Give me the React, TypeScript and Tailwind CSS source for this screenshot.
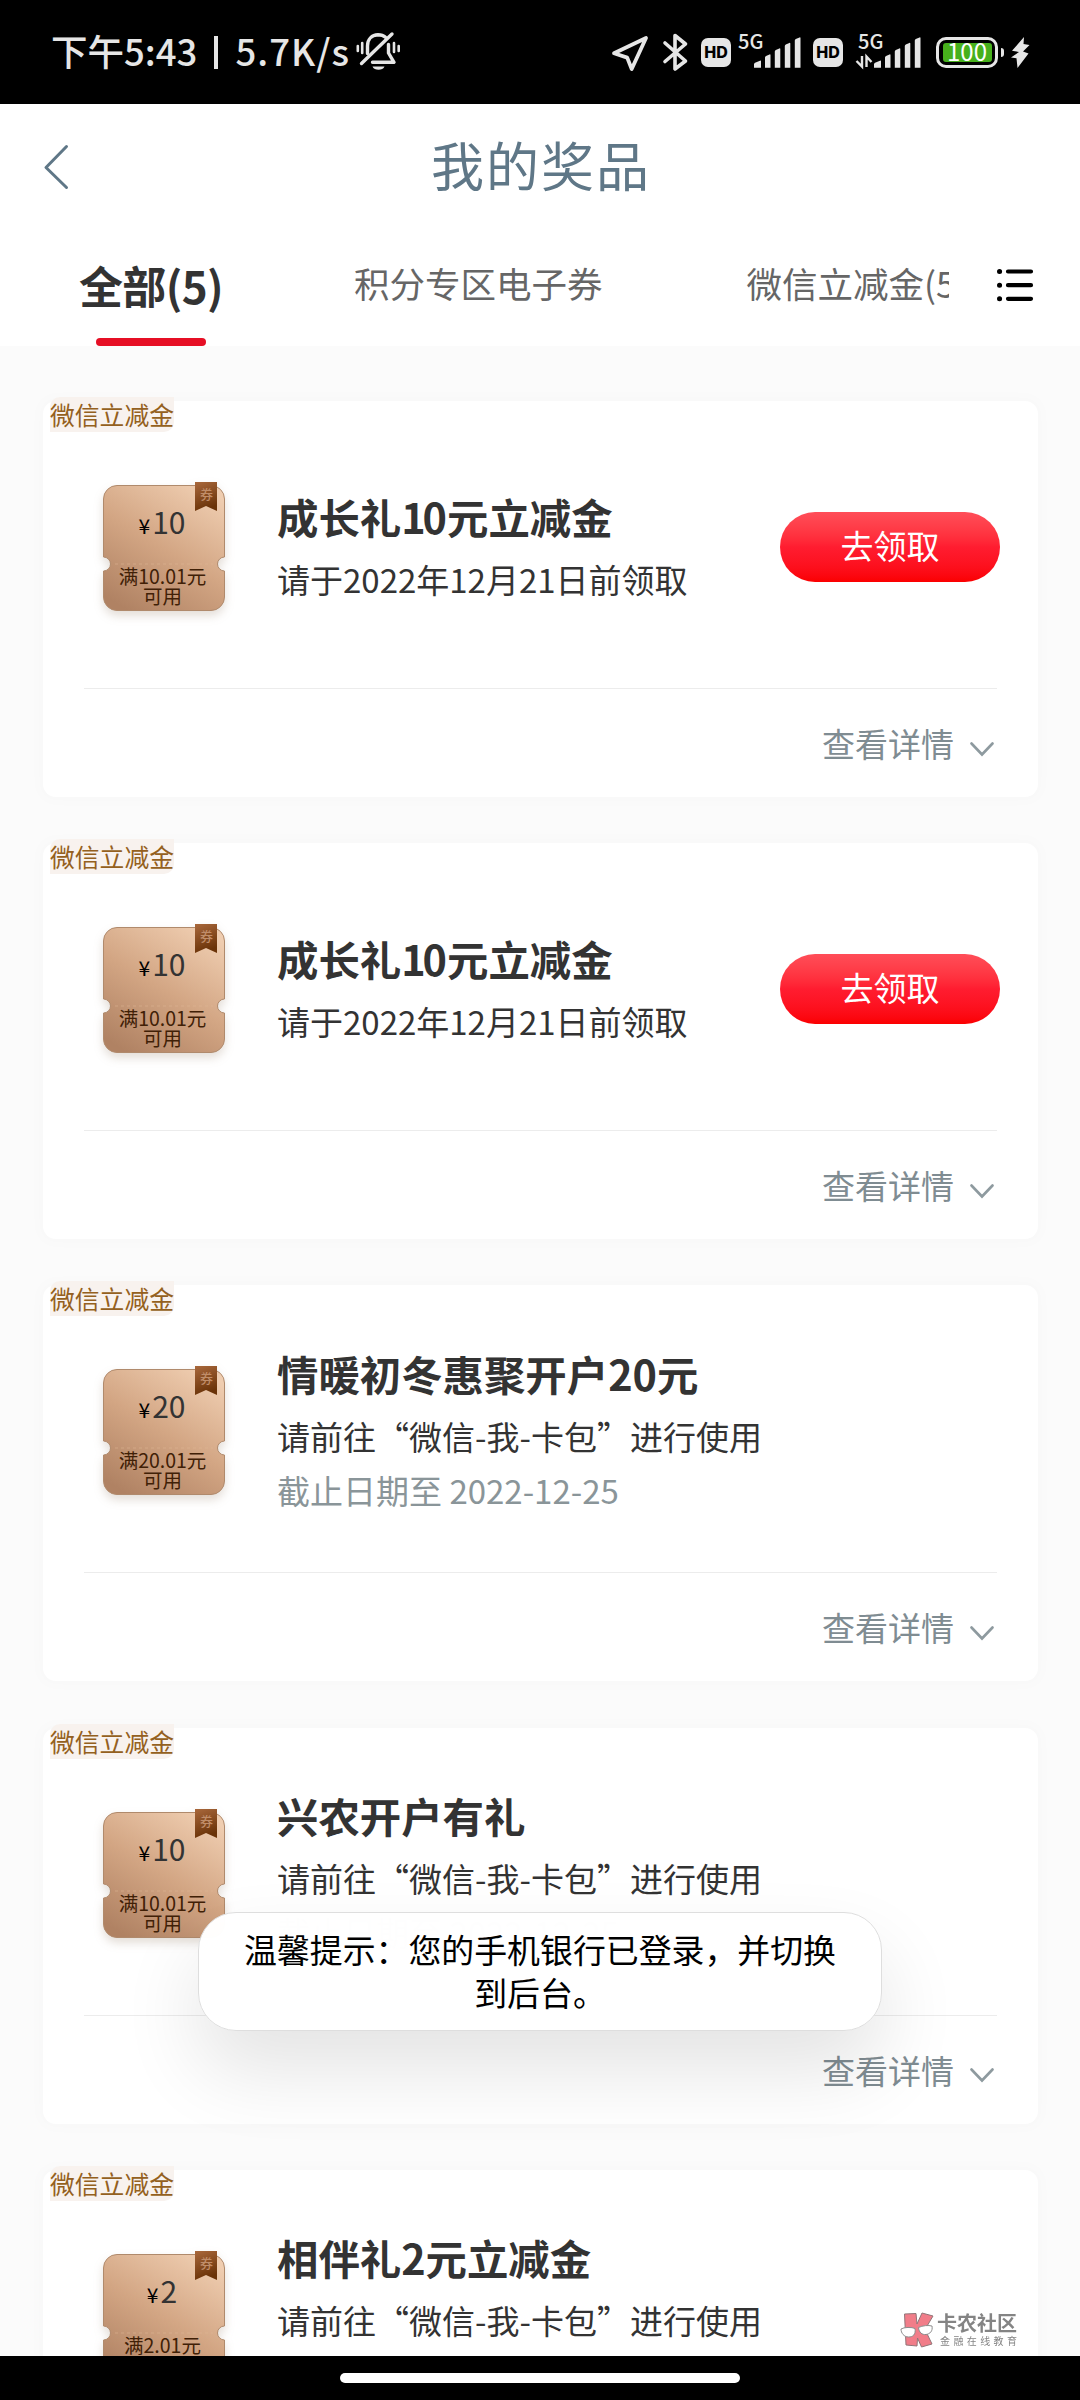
import React from "react";

type Prize = {
  id: number;
  tag: string;
  amount: string;
  limit: string;
  title: string;
  desc: string;
  deadline?: string;
  claimable?: boolean;
};

const PRIZES: Prize[] = [
  { id: 1, tag: "微信立减金", amount: "10", limit: "10.01", title: "成长礼10元立减金", desc: "请于2022年12月21日前领取", claimable: true },
  { id: 2, tag: "微信立减金", amount: "10", limit: "10.01", title: "成长礼10元立减金", desc: "请于2022年12月21日前领取", claimable: true },
  { id: 3, tag: "微信立减金", amount: "20", limit: "20.01", title: "情暖初冬惠聚开户20元", desc: "请前往“微信-我-卡包”进行使用", deadline: "截止日期至 2022-12-25" },
  { id: 4, tag: "微信立减金", amount: "10", limit: "10.01", title: "兴农开户有礼", desc: "请前往“微信-我-卡包”进行使用", deadline: "截止日期至 2022-12-25" },
  { id: 5, tag: "微信立减金", amount: "2", limit: "2.01", title: "相伴礼2元立减金", desc: "请前往“微信-我-卡包”进行使用", deadline: "截止日期至 2022-12-25" },
];

function MutedBell() {
  return (
    <svg className="ml-[6px] h-[44px] w-[46px]" viewBox="0 0 46 44" fill="none" stroke="#e6e6e6" strokeWidth="3.400" strokeLinecap="round" strokeLinejoin="round">
      <path d="M11.5 23.5V16C11.5 9 16 5 22 4.8c3 0 5.600.8 7.500 2.500" />
      <path d="M32.500 14.500v8.500l5.500 9.300H16.500" />
      <path d="M5.500 33.500L36 4" />
      <path d="M16.500 36.500h12c-1.500 4.300-10.500 4.300-12 0z" fill="#e6e6e6" stroke="none" />
      <path d="M1.800 16v5M6.200 13v10M38 13v9M42.700 16v5" strokeWidth="2.600" />
    </svg>
  );
}

function HdBadge() {
  return (
    <div className="flex h-[29px] w-[30px] items-center justify-center rounded-[7px] bg-[#e6e6e6] font-['Inter'] text-[16px] font-extrabold leading-none text-black">
      HD
    </div>
  );
}

function Signal({ data }: { data?: boolean }) {
  return (
    <div className="relative h-[44px] w-[64px]">
      <span className="absolute left-0 top-[2px] font-['Noto_Sans_CJK_SC',sans-serif] text-[20px] font-medium leading-[18px] text-[#e6e6e6]">
        5G
      </span>
      <svg className="h-[44px] w-[64px] overflow-visible" viewBox="0 0 64 44" fill="#e6e6e6">
        <path d="M16 37.700v-3.500q0-1 1-1.500l5-2q1-.4 1 .6v6.400zM27 37.700V27.500q0-1 1-1.500l3.500-1.600q1-.4 1 .6v12.700zM36.800 37.700V21.500q0-1 1-1.500l3.500-1.600q1-.4 1 .6v18.700zM46.800 37.700V16q0-1 1-1.500l3.500-1.600q1-.4 1 .6v24.200zM56.800 37.700V10.500q0-1 1-1.500l3.700-1.600q1-.4 1 .6v29.700z" />
        {data && (
          <path d="M4 26v10.500L-1.500 31M8.500 37V26.500l5 5.500" fill="none" stroke="#e6e6e6" strokeWidth="2.400" />
        )}
      </svg>
    </div>
  );
}

function StatusBar() {
  return (
    <div className="flex h-[104px] shrink-0 items-start bg-black pl-[51px] pt-[30px] text-[#e6e6e6]">
      <div className="flex h-[44px] w-[299px] items-center justify-between whitespace-nowrap text-[36.500px] font-medium leading-[44px]">
        <span className="mt-[-3px]">下午5:43</span>
        <span className="h-[33px] w-[4px] bg-[#e6e6e6]" />
        <span className="mt-[-3px] tracking-[1px]">5.7K/s</span>
      </div>
      <MutedBell />
      <div className="ml-[209px] flex h-[44px] items-center">
        <svg className="h-[44px] w-[40px]" viewBox="0 0 40 44" fill="none" stroke="#e6e6e6" strokeWidth="3.800" strokeLinejoin="round">
          <path d="M3 23.300L35 8 20.700 39 16.200 27.600z" />
        </svg>
        <svg className="ml-[10px] h-[44px] w-[28px]" viewBox="0 0 28 44" fill="none" stroke="#e6e6e6" strokeWidth="3.600" strokeLinecap="round" strokeLinejoin="round">
          <path d="M4 13L24.500 31 14 39V5.500L24.500 14 4 31.500" />
        </svg>
        <div className="ml-[12px]"><HdBadge /></div>
        <div className="ml-[7px]"><Signal /></div>
        <div className="ml-[11px]"><HdBadge /></div>
        <div className="ml-[15px]"><Signal data /></div>
        <div className="ml-[14px] flex h-[31px] w-[62px] items-center justify-center rounded-[10px] border-[3px] border-[#e6e6e6]">
          <div className="flex h-[19px] w-[49px] items-center justify-center rounded-[3px] bg-[#47b01c] text-[24px] leading-none text-white">
            <span className="mt-[-2px]">100</span>
          </div>
        </div>
        <div className="ml-[3px] h-[9px] w-[3px] rounded-r bg-[#e6e6e6]" />
        <svg className="ml-[7px] h-[44px] w-[20px]" viewBox="0 0 20 44" fill="#e6e6e6">
          <path d="M13 7L1 20.800l7 1.200L0 27.500l5.500.8L6.500 38 17.500 23.500 12 21.500 18.500 15 12.500 14z" />
        </svg>
      </div>
    </div>
  );
}

function Header() {
  return (
    <header className="h-[242px] shrink-0 bg-white">
      <div className="flex h-[126px] items-center">
        <svg className="ml-[42px] h-[48px] w-[30px]" viewBox="0 0 30 48" fill="none" stroke="#5f7787" strokeWidth="3" strokeLinecap="round" strokeLinejoin="round">
          <path d="M24.500 3.500L4 24.500l20.500 20" />
        </svg>
        <h1 className="mr-[70px] mt-[-6px] flex-1 text-center text-[53px] leading-[70px] tracking-[2px] text-[#5f7787]">我的奖品</h1>
      </div>
      <nav className="flex h-[116px]">
        <div className="flex w-[949px] overflow-hidden whitespace-nowrap text-[35.500px] text-[#666]">
          <div className="ml-[81px] flex w-[140px] shrink-0 flex-col items-center">
            <span className="mt-[25px] h-[64px] text-[44px] font-bold leading-[60px] tracking-[-0.600px] text-[#333]">全部(5)</span>
            <span className="mt-[19px] h-[8px] w-[110px] rounded-full bg-[#e60f25]" />
          </div>
          <span className="ml-[133px] mt-[25px] leading-[56px]">积分专区电子券</span>
          <span className="ml-[144px] mt-[25px] leading-[56px]">微信立减金(5)</span>
        </div>
        <svg className="ml-[47px] mt-[37px] h-[36px] w-[38px]" viewBox="0 0 38 36" stroke="#000" strokeWidth="4.200" strokeLinecap="round">
          <path d="M12 4.500h23M12 18.200h23M12 31.800h23" />
          <path d="M3.500 4.500h.1M3.500 18.200h.1M3.500 31.800h.1" strokeWidth="5" />
        </svg>
      </nav>
    </header>
  );
}

function Coupon({ amount, limit }: { amount: string; limit: string }) {
  return (
    <div className="relative mt-px h-[126px] w-[122px] shrink-0">
      <svg className="absolute left-0 top-[-4px] h-[130px] w-[122px] overflow-visible drop-shadow-[0_5px_5px_rgba(120,90,60,0.2)]" viewBox="0 -4 122 130">
        <defs>
          <linearGradient id="coupon" x1="0.8" y1="0" x2="0.200" y2="1">
            <stop offset="0" stopColor="#efcdb0" />
            <stop offset="0.500" stopColor="#d3a684" />
            <stop offset="1" stopColor="#b08263" />
          </linearGradient>
          <linearGradient id="ribbon" x1="0" y1="0" x2="0.300" y2="1">
            <stop offset="0" stopColor="#a9683c" />
            <stop offset="1" stopColor="#6a3308" />
          </linearGradient>
        </defs>
        <path
          d="M14 0.500H108A13.500 13.500 0 0 1 121.500 14V72A7 7 0 0 0 121.500 86V112A13.500 13.500 0 0 1 108 125.500H14A13.500 13.500 0 0 1 0.500 112V86A7 7 0 0 0 0.500 72V14A13.500 13.500 0 0 1 14 0.500z"
          fill="url(#coupon)"
          stroke="#b08a6c"
        />
        <path d="M12 79H110" stroke="#e0b896" strokeWidth="1" strokeDasharray="3 3" opacity="0.5" />
        <path d="M92 -3h22v29l-11-5-11 5z" fill="url(#ribbon)" />
      </svg>
      <span className="absolute left-[97px] top-0 text-[13px] font-medium leading-[18px] text-[#c08d69]">券</span>
      <div className="relative flex items-baseline justify-center pr-[4px] pt-[15px] text-[30px] leading-[42px] text-[#333]">
        <span className="mr-[2px] text-[21px] text-black">¥</span>
        {amount}
      </div>
      <div className="relative mt-[20px] pr-[3px] text-center text-[19.500px] leading-[20px] text-[#402006]">
        满{limit}元
        <br />
        可用
      </div>
    </div>
  );
}

function PrizeCard({ prize }: { prize: Prize }) {
  return (
    <article className="relative h-[396px] w-[995px] shrink-0 rounded-[13px] bg-white shadow-[0_0_12px_6px_rgba(0,0,0,0.012)]">
      <span className="absolute left-[7px] top-[-4px] rounded-br-[10px] rounded-tl-[10px] bg-[#f8f2ee] text-[24.800px] leading-[35px] text-[#946020]">
        {prize.tag}
      </span>
      <div className="flex h-[287px] items-center pl-[60px] pr-[38px] pt-[6px]">
        <Coupon amount={prize.amount} limit={prize.limit} />
        <div className="ml-[52px] mt-[-2px] flex-1 whitespace-nowrap text-[33px] leading-[54px] text-[#333]">
          <h2 className="mb-[8px] text-[41.400px] font-bold leading-[56px]">
            {/* the digit 1 is set tighter than the other figures */}
            {prize.title.split(/(1)/).map((s, i) => (
              <span key={i} className={s === "1" ? "tracking-[-3px]" : ""}>{s}</span>
            ))}
          </h2>
          <p>{prize.desc}</p>
          {prize.deadline && <p className="text-[#8a9599]">{prize.deadline}</p>}
        </div>
        {prize.claimable && (
          <button className="mt-[-2px] h-[70px] w-[220px] rounded-full bg-linear-to-b from-[#ff4d58] via-[#ff1c30] to-[#fb0000] pb-[3px] text-[33px] leading-none text-white">
            去领取
          </button>
        )}
      </div>
      <div className="mx-[41px] h-px bg-[#ececec]" />
      <div className="flex h-[108px] items-center justify-end pr-[43px] text-[33px] leading-[48px] text-[#7f8c92]">
        查看详情
        <svg className="ml-[15px] mt-[13px] h-[16px] w-[26px]" viewBox="0 0 26 16" fill="none" stroke="#8e9a9f" strokeWidth="2.600" strokeLinecap="round">
          <path d="M2.500 1.500L13 12.500 23.500 1.500" />
        </svg>
      </div>
    </article>
  );
}

function Watermark() {
  return (
    <div className="absolute left-[900px] top-[2311px] flex opacity-90">
      <svg className="h-[40px] w-[36px]" viewBox="0 0 36 40">
        <path d="M4.500 3L16 2.500 17 13 22 2 33 5 25 18.500 32 33 21.500 36 17.500 27 17 35 6 34z" fill="#f0707d" stroke="#85666a" strokeWidth="1" />
        <path d="M1 18c3-2 11-2 14-.5 1 6-2 8.500-6.500 8.500S1 22 1 18zM18.500 16.500c4-2 10-2.500 13.500-1.500 1 5-2 8-6 8.500s-7-2-7.500-7z" fill="#fff" stroke="#808080" strokeWidth="1" />
      </svg>
      <div className="ml-[1px] text-[#777]">
        <div className="mt-px text-[20px] font-bold leading-[22px]">卡农社区</div>
        <div className="ml-[3px] text-[10px] leading-[14px] tracking-[3.400px]">金融在线教育</div>
      </div>
    </div>
  );
}

export default function App() {
  return (
    <div lang="zh-CN" className="relative flex h-[2400px] w-[1080px] flex-col overflow-hidden bg-[#fbfbfb] font-['Noto_Sans_CJK_SC',sans-serif]">
      <StatusBar />
      <Header />
      <main className="flex min-h-0 flex-1 flex-col gap-[46.200px] overflow-hidden pl-[43px] pt-[55px]">
        {PRIZES.map((p) => (
          <PrizeCard key={p.id} prize={p} />
        ))}
      </main>
      <div className="flex h-[44px] shrink-0 justify-center bg-black pt-[17px]">
        <div className="h-[10px] w-[400px] rounded-full bg-white" />
      </div>

      {/* toast */}
      <div className="absolute left-[198px] top-[1912px] h-[119px] w-[684px] rounded-[38px] border border-[#dedede] bg-white/99 pt-[14px] text-center text-[32.900px] leading-[43px] text-black shadow-[0_40px_80px_rgba(0,0,0,0.11)]">
        温馨提示：您的手机银行已登录，并切换
        <br />
        到后台。
      </div>
      <Watermark />
    </div>
  );
}
